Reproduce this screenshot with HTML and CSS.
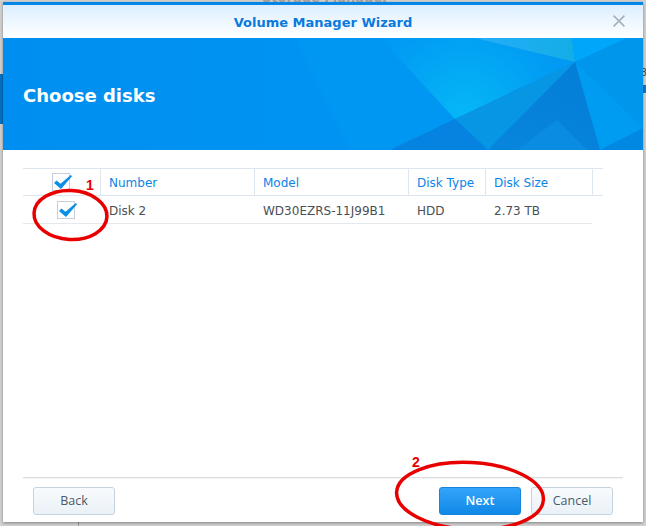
FILE: index.html
```html
<!DOCTYPE html>
<html lang="en">
<head>
<meta charset="utf-8">
<title>Volume Manager Wizard</title>
<link rel="stylesheet" href="styles.css">
</head>
<body>
<div class="backdrop-band backdrop-left"></div>
<div class="backdrop-band backdrop-right"></div>
<div class="backdrop-title">Storage Manager</div>
<span class="backdrop-frag">8</span>
<div class="backdrop-rule"></div>
<main class="window">
  <header class="titlebar">
    <h1 class="title">Volume Manager Wizard</h1>
    <svg class="close" width="12" height="12" viewBox="0 0 12 12"><path d="M.6.6 11.400 11.400M11.400.6.6 11.400" stroke="#a9b2ba" stroke-width="1.700" fill="none"/></svg>
  </header>
  <section class="banner">
    <svg class="facets" width="640" height="112" viewBox="0 0 640 112">
      <defs>
        <radialGradient id="glow" gradientUnits="userSpaceOnUse" cx="462" cy="78" r="105">
          <stop offset="0" stop-color="#05b8f6"/>
          <stop offset=".55" stop-color="#03a6f4"/>
          <stop offset="1" stop-color="#0099f3"/>
        </radialGradient>
        <linearGradient id="sheen" gradientUnits="userSpaceOnUse" x1="480" y1="0" x2="572" y2="24">
          <stop offset="0" stop-color="#22aef7"/>
          <stop offset="1" stop-color="#14ade6"/>
        </linearGradient>
        <linearGradient id="base" gradientUnits="userSpaceOnUse" x1="0" y1="0" x2="300" y2="0">
          <stop offset="0" stop-color="#008ff0"/>
          <stop offset="1" stop-color="#0093f2"/>
        </linearGradient>
        <linearGradient id="dark" gradientUnits="userSpaceOnUse" x1="572" y1="24" x2="530" y2="112">
          <stop offset="0" stop-color="#047ed6"/>
          <stop offset="1" stop-color="#0784dc"/>
        </linearGradient>
      </defs>
      <rect width="640" height="112" fill="url(#base)"/>
      <polygon points="292,0 377,0 452,81 387,112 347,112" fill="#0097f3"/>
      <polygon points="377,0 472,0 572,24 452,81" fill="url(#glow)"/>
      <polygon points="472,0 569,0 572,24" fill="url(#sheen)"/>
      <polygon points="569,0 624,0 572,24" fill="#00a6fa"/>
      <polygon points="624,0 640,0 640,90 572,24" fill="#0096ec"/>
      <polygon points="572,24 640,90 597,112" fill="#009cf1"/>
      <polygon points="640,90 640,112 597,112" fill="#0088e2"/>
      <polygon points="452,81 572,24 485,112" fill="#0796e4"/>
      <polygon points="572,24 597,112 485,112" fill="url(#dark)"/>
      <polygon points="514,112 554,82 584,112" fill="#0a8ce2"/>
      <polygon points="452,81 485,112 387,112" fill="#0682e0"/>
    </svg>
    <h2 class="banner-title">Choose disks</h2>
  </section>
  <section class="content">
    <div class="grid grid-head">
      <div class="cell cell-check cell-check-head"><span class="box"><svg class="tick" width="18" height="14" viewBox="0 0 18 14"><path d="M0 8 2.500 5.500 6.500 8.800 16.800 0 18 1.300 7 14Z" fill="#0a8ee8"/></svg></span></div>
      <div class="cell">Number</div>
      <div class="cell">Model</div>
      <div class="cell">Disk Type</div>
      <div class="cell">Disk Size</div>
      <div class="cell cell-end"></div>
    </div>
    <div class="grid grid-row">
      <div class="cell cell-check cell-check-row"><span class="box"><svg class="tick" width="18" height="14" viewBox="0 0 18 14"><path d="M0 8 2.500 5.500 6.500 8.800 16.800 0 18 1.300 7 14Z" fill="#0a8ee8"/></svg></span></div>
      <div class="cell">Disk 2</div>
      <div class="cell">WD30EZRS-11J99B1</div>
      <div class="cell">HDD</div>
      <div class="cell">2.73 TB</div>
    </div>
  </section>
  <footer class="footer">
    <button class="btn">Back</button>
    <div class="actions">
      <button class="btn btn-primary">Next</button>
      <button class="btn">Cancel</button>
    </div>
  </footer>
</main>
<svg class="marks" width="646" height="526" viewBox="0 0 646 526">
  <ellipse cx="70.500" cy="215" rx="36.500" ry="24.500" fill="none" stroke="#e80000" stroke-width="3.500" transform="rotate(3 70.500 215)"/>
  <ellipse cx="470" cy="496" rx="73.500" ry="33.500" fill="none" stroke="#e80000" stroke-width="3.500" transform="rotate(3 470 496)"/>
</svg>
<span class="mark-num mark-one">1</span>
<span class="mark-num mark-two">2</span>
</body>
</html>
```
FILE: styles.css
```css
* { box-sizing: border-box; }
html, body { margin: 0; height: 100%; }
body {
  position: relative;
  width: 646px;
  height: 526px;
  overflow: hidden;
  background: #d2d2d2;
  font-family: "DejaVu Sans", sans-serif;
}
.backdrop-band {
  position: absolute;
  background: #0572c2;
}
.backdrop-left { left: 0; top: 74px; width: 3px; height: 50px; }
.backdrop-right { right: 0; top: 85px; width: 3px; height: 8px; background: #1a74c8; }
.backdrop-title {
  position: absolute;
  left: 262px;
  top: -10px;
  font-size: 13px;
  font-weight: 700;
  color: #a2a2a2;
}
.backdrop-frag {
  position: absolute;
  left: 640px;
  top: 66px;
  font-size: 11px;
  color: #444;
}
.backdrop-rule {
  position: absolute;
  left: 78px;
  top: 522px;
  width: 1px;
  height: 4px;
  background: #9a9a9a;
}
.window {
  position: absolute;
  left: 3px;
  top: 2px;
  width: 640px;
  height: 520px;
  display: flex;
  flex-direction: column;
  background: #fff;
  border-top: 3px solid #0086e6;
  box-shadow: 0 1px 3px rgba(0,0,0,.4);
}
.titlebar {
  height: 33px;
  flex: none;
  display: flex;
  align-items: center;
  justify-content: center;
  padding-top: 1px;
  position: relative;
  background: linear-gradient(#dcefff, #fff);
}
.title {
  margin: 0;
  font-size: 13px;
  font-weight: 700;
  color: #0a7ade;
}
.close { position: absolute; right: 18px; top: 10px; }
.banner {
  position: relative;
  height: 112px;
  flex: none;
  display: flex;
  align-items: center;
  padding: 3px 0 0 20px;
  overflow: hidden;
}
.facets { position: absolute; left: 0; top: 0; }
.banner-title {
  position: relative;
  margin: 0;
  font-size: 18px;
  font-weight: 700;
  color: #fff;
}
.content {
  flex: 1;
  padding: 18px 40px 0 20px;
}
.grid {
  display: grid;
  grid-template-columns: 78px 154px 154px 77px 107px 10px;
  width: 580px;
  font-size: 12px;
}
.grid-head {
  height: 28px;
  border-top: 1px solid #dde6ef;
  border-bottom: 1px solid #dde6ef;
  color: #0a84e8;
}
.grid-head .cell { border-right: 1px solid #dde6ef; }
.grid-head .cell-end { border-right: 0; }
.grid-row {
  height: 28px;
  width: 569px;
  grid-template-columns: 78px 154px 154px 77px 106px;
  border-bottom: 1px solid #e4e9ee;
  color: #4a4f55;
}
.cell {
  display: flex;
  align-items: center;
  padding: 1px 0 0 8px;
  min-width: 0;
  white-space: nowrap;
}
.grid-row .cell { padding-top: 2px; }
.grid-row .cell-check, .grid-head .cell-check { padding-top: 0; }
.grid-head .cell-check-head { padding-left: 29px; }
.grid-row .cell-check-row { padding-left: 34px; }
.box {
  position: relative;
  display: block;
  width: 18px;
  height: 18px;
  border: 1px solid #c6d0da;
  background: #fff;
}
.tick { position: absolute; left: 1px; top: 1px; }
.footer {
  flex: none;
  height: 45px;
  margin: 0 20px;
  padding: 9px 10px 0;
  border-top: 1px solid #dcdcdc;
  box-shadow: inset 0 1px 1px rgba(0,0,0,.04);
  display: flex;
  justify-content: space-between;
}
.actions { display: flex; gap: 10px; }
.btn {
  width: 82px;
  height: 28px;
  padding: 0 0 2px;
  border: 1px solid #c5d3e0;
  border-radius: 3px;
  background: linear-gradient(#f8fbfd, #eaf1f7);
  color: #4a5a6a;
  font-family: "Open Sans", sans-serif;
  font-size: 12.500px;
}
.btn-primary {
  border-color: #1484dc;
  background: linear-gradient(#34a4fb, #1088e6);
  color: #fff;
  font-weight: 600;
}
.marks { position: absolute; left: 0; top: 0; pointer-events: none; }
.mark-num {
  position: absolute;
  font-family: "Liberation Sans", sans-serif;
  font-size: 14px;
  font-weight: 700;
  color: #e80000;
}
.mark-one { left: 86px; top: 177px; }
.mark-two { left: 412px; top: 454px; }
```
